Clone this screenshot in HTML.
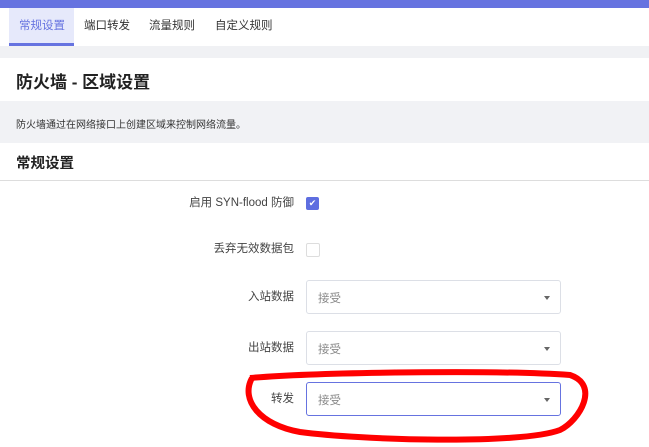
<!DOCTYPE html>
<html><head><meta charset="utf-8"><style>
body{margin:0;width:649px;height:447px;overflow:hidden;background:#fff;font-family:"Liberation Sans","Noto Sans CJK SC",sans-serif;color:#333;position:relative}
.a{position:absolute}
.lbl{position:absolute;right:355px;font-size:11.5px;color:#444;white-space:nowrap}
.sel{position:absolute;left:306px;width:255px;height:34px;border:1px solid #dcdfe6;border-radius:3px;box-sizing:border-box;font-size:11.5px;color:#888}
.sel span{position:absolute;left:11px;top:9px}
.sel i{position:absolute;right:10px;top:15px;border:3px solid transparent;border-top:4px solid #666}
</style></head><body>
<div class="a" style="left:0;top:0;width:649px;height:8px;background:#6673e0"></div>
<div class="a" style="left:9px;top:8px;width:65px;height:35px;background:#e6e9fb;border-bottom:3px solid #6673e0"></div>
<div class="a" style="left:19px;top:17px;font-size:11.5px;color:#6673e0">常规设置</div>
<div class="a" style="left:84px;top:17px;font-size:11.5px;color:#333">端口转发</div>
<div class="a" style="left:149px;top:17px;font-size:11.5px;color:#333">流量规则</div>
<div class="a" style="left:215px;top:17px;font-size:11.5px;color:#333">自定义规则</div>
<div class="a" style="left:0;top:46px;width:649px;height:12px;background:#f0f1f4"></div>
<div class="a" style="left:16px;top:68px;font-size:17px;font-weight:bold;color:#222">防火墙 - 区域设置</div>
<div class="a" style="left:0;top:101px;width:649px;height:42px;background:#f1f2f5"></div>
<div class="a" style="left:16px;top:116px;font-size:10px;color:#333">防火墙通过在网络接口上创建区域来控制网络流量。</div>
<div class="a" style="left:16px;top:152px;font-size:14.5px;font-weight:bold;color:#222">常规设置</div>
<div class="a" style="left:0;top:180px;width:649px;height:1px;background:#ddd"></div>
<div class="lbl" style="top:194px">启用 SYN-flood 防御</div>
<div class="a" style="left:306px;top:197px;width:13px;height:13px;background:#5e6ee0;border-radius:2px;color:#fff;font-size:9px;text-align:center;line-height:13px">✔</div>
<div class="lbl" style="top:240px">丢弃无效数据包</div>
<div class="a" style="left:306px;top:243px;width:12px;height:12px;border:1px solid #ddd;border-radius:2px"></div>
<div class="lbl" style="top:288px">入站数据</div>
<div class="sel" style="top:280px"><span>接受</span><i></i></div>
<div class="lbl" style="top:339px">出站数据</div>
<div class="sel" style="top:331px"><span>接受</span><i></i></div>
<div class="lbl" style="top:390px">转发</div>
<div class="sel" style="top:382px;border-color:#6673e0"><span>接受</span><i></i></div>
<svg class="a" style="left:0;top:0" width="649" height="447"><path d="M250 378 C 320 372, 500 370, 570 375 C 600 385, 580 420, 560 430 C 520 445, 360 440, 300 432 C 260 425, 240 400, 252 378" fill="none" stroke="#f00" stroke-width="6"/></svg>
</body></html>
